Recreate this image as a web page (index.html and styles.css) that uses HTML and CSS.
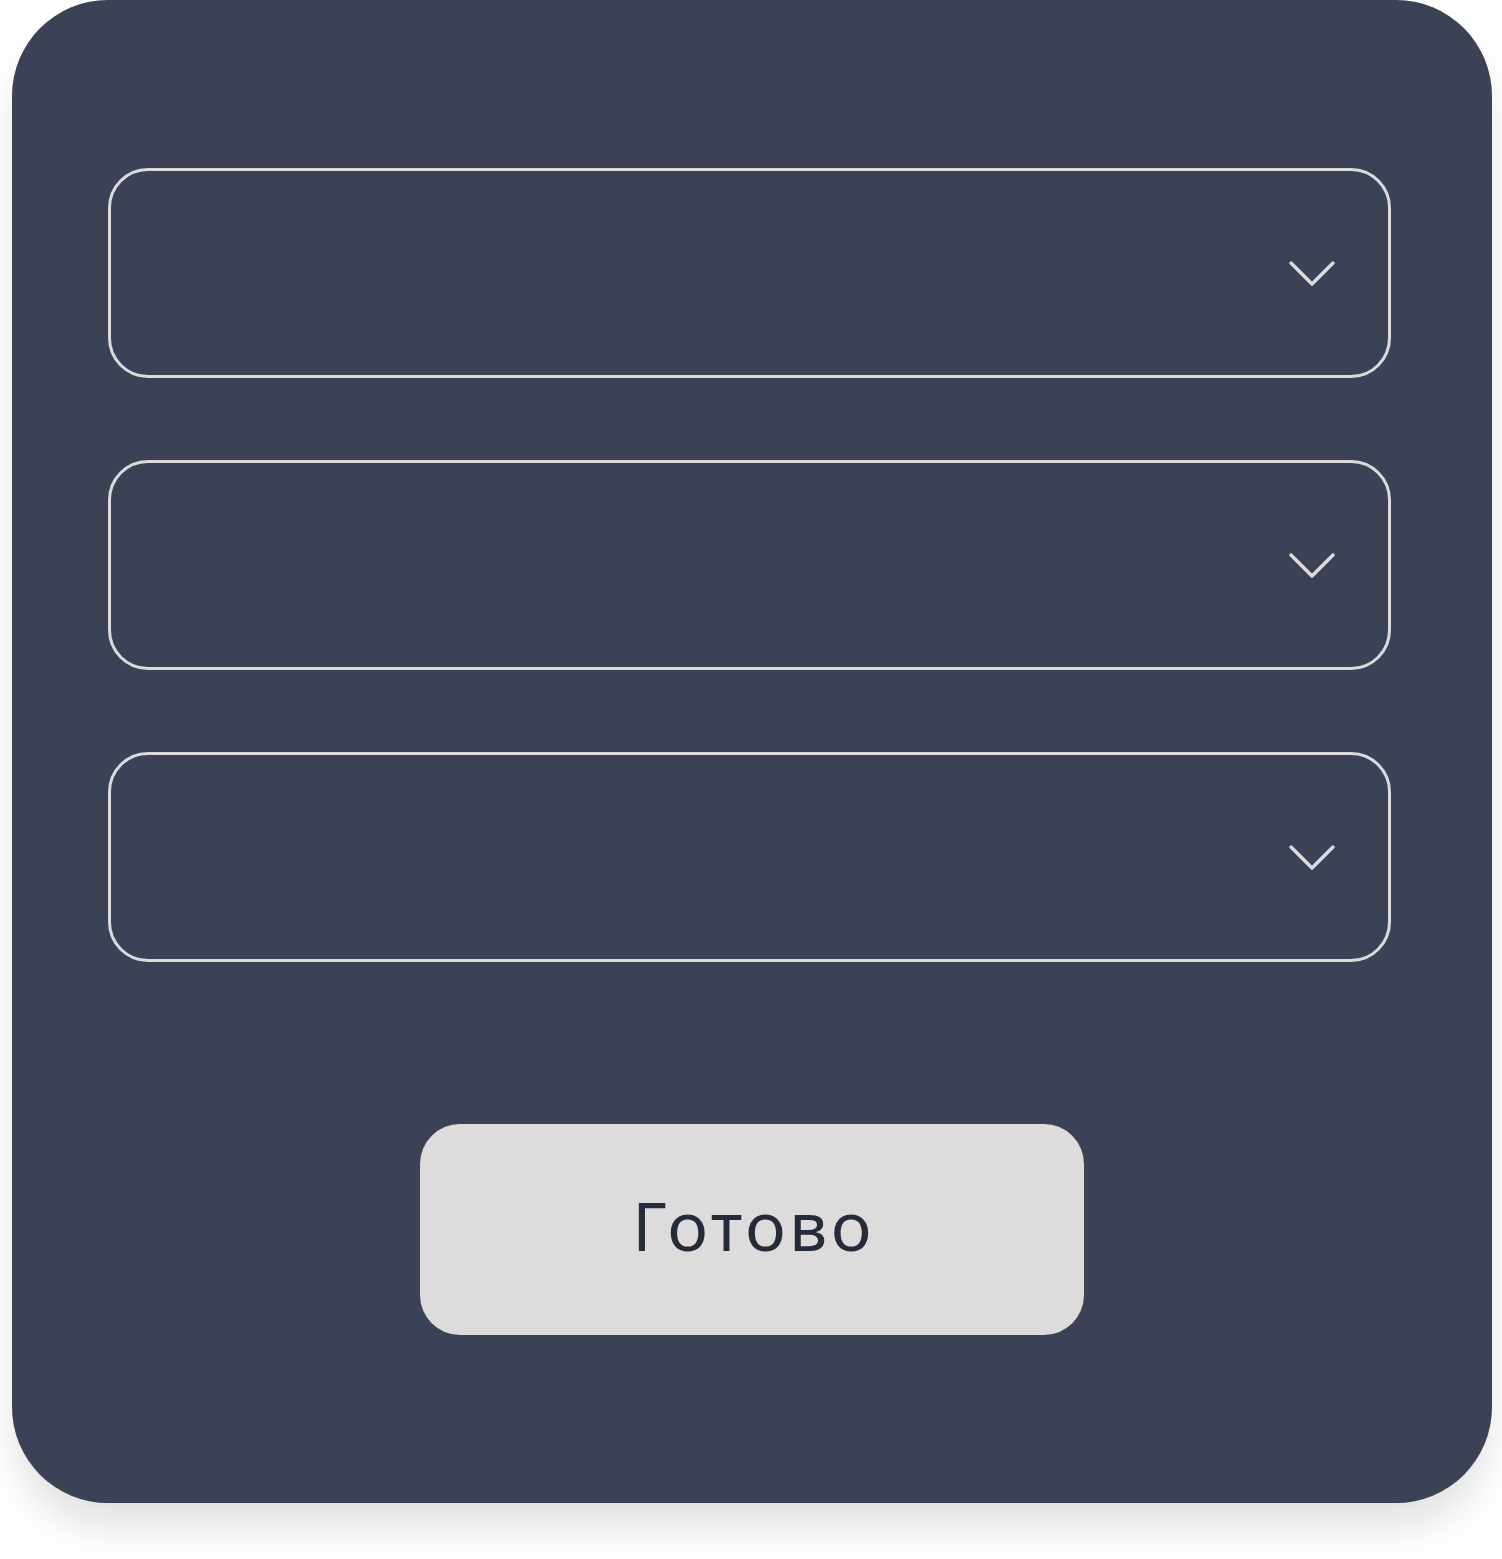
FILE: index.html
```html
<!DOCTYPE html>
<html lang="ru">
<head>
    <meta charset="UTF-8">
    <meta name="viewport" content="width=device-width, initial-scale=1.0">
    <title>Фильтр</title>
    <link rel="stylesheet" href="styles.css">
</head>
<body>
    <div class="card">
        <div class="select-list">
            <div class="select-box">
                <svg class="chevron" width="48" height="30" viewBox="0 0 48 30">
                    <path d="M3 5 L24 26 L45 5" />
                </svg>
            </div>
            <div class="select-box">
                <svg class="chevron" width="48" height="30" viewBox="0 0 48 30">
                    <path d="M3 5 L24 26 L45 5" />
                </svg>
            </div>
            <div class="select-box">
                <svg class="chevron" width="48" height="30" viewBox="0 0 48 30">
                    <path d="M3 5 L24 26 L45 5" />
                </svg>
            </div>
        </div>

        <div class="actions">
            <button class="done-button">Готово</button>
        </div>
    </div>
</body>
</html>
```

FILE: styles.css
```css
* {
    margin: 0;
    padding: 0;
    box-sizing: border-box;
}

body {
    background: #ffffff;
    font-family: "Noto Sans", sans-serif;
    padding: 0 10px 56px 12px;
}

.card {
    width: 1480px;
    height: 1503px;
    background: #3c4255;
    border-radius: 96px;
    padding: 168px 101px 0 96px;
    box-shadow: 0 28px 40px -4px rgba(0, 0, 0, 0.12);
}

.select-list {
    display: flex;
    flex-direction: column;
    gap: 82px;
}

.select-box {
    height: 210px;
    border: 3px solid #dcdadb;
    border-radius: 40px;
    display: flex;
    align-items: center;
    justify-content: flex-end;
    padding-right: 52px;
}

.chevron {
    display: block;
}

.chevron path {
    fill: none;
    stroke: #dcdadb;
    stroke-width: 3.5;
    stroke-linecap: round;
    stroke-linejoin: round;
}

.actions {
    display: flex;
    justify-content: center;
    padding-top: 162px;
    padding-left: 5px;
}

.done-button {
    width: 664px;
    height: 211px;
    border: none;
    border-radius: 40px;
    background: #dddbdc;
    color: #262b3a;
    font-family: "Noto Sans", sans-serif;
    font-size: 68px;
    font-weight: 400;
    letter-spacing: 3.5px;
    padding: 0 0 10px 3px;
}
```
